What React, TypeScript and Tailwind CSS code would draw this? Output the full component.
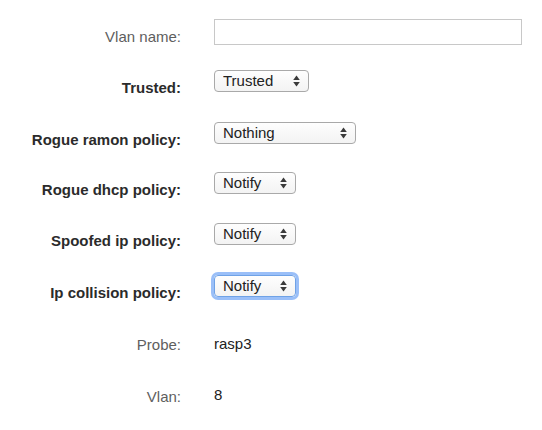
const rows = [
  { label: 'Vlan name:', bold: false, kind: 'input', h: 'h-[51px]', lt: 'pt-[8px]' },
  { label: 'Trusted:', bold: true, kind: 'select', value: 'Trusted', w: 'w-[95px]', h: 'h-[52px]', lt: 'pt-[8px]' },
  { label: 'Rogue ramon policy:', bold: true, kind: 'select', value: 'Nothing', w: 'w-[142px]', h: 'h-[50px]', lt: 'pt-[8px]' },
  { label: 'Rogue dhcp policy:', bold: true, kind: 'select', value: 'Notify', w: 'w-[82px]', h: 'h-[51px]', lt: 'pt-[8px]' },
  { label: 'Spoofed ip policy:', bold: true, kind: 'select', value: 'Notify', w: 'w-[82px]', h: 'h-[52px]', lt: 'pt-[8px]' },
  { label: 'Ip collision policy:', bold: true, kind: 'select', value: 'Notify', w: 'w-[82px]', h: 'h-[53px]', lt: 'pt-[8px]', focus: true },
  { label: 'Probe:', bold: false, kind: 'text', value: 'rasp3', h: 'h-[51px]', lt: 'pt-[7px]' },
  { label: 'Vlan:', bold: false, kind: 'text', value: '8', h: 'h-[51px]', lt: 'pt-[8px]' },
];

function Arrows() {
  return (
    <svg
      width="7"
      height="12"
      viewBox="0 0 7 12"
      className="pointer-events-none absolute right-[8px] top-1/2 -translate-y-1/2"
    >
      <path d="M3.5 0.5 L6.8 5 L0.2 5 Z" fill="#3a3a3a" />
      <path d="M3.5 11.5 L6.8 7 L0.2 7 Z" fill="#3a3a3a" />
    </svg>
  );
}

function FakeSelect({ value, w, focus }: { value: string; w?: string; focus?: boolean }) {
  return (
    <div
      className={
        'relative h-[22px] rounded-[4px] border bg-gradient-to-b from-[#fefefe] to-[#f3f3f3] ' +
        (w ?? '') +
        (focus
          ? ' border-[#6fa2e6] shadow-[0_0_0_3px_rgba(120,170,245,0.75)]'
          : ' border-[#a9a9a9]')
      }
    >
      <select
        defaultValue={value}
        className="h-full w-full appearance-none bg-transparent pl-[8px] pr-[20px] text-[15px] leading-[20px] text-[#222] outline-none"
      >
        <option>{value}</option>
      </select>
      <Arrows />
    </div>
  );
}

export default function App() {
  return (
    <div className="min-h-[430px] w-[542px] bg-white pt-[19px] font-['Liberation_Sans',Arial,sans-serif] text-[15px] leading-[20px]">
      {rows.map((r) => (
        <div key={r.label} className={'flex items-start ' + r.h}>
          <label
            className={
              'w-[181px] shrink-0 text-right ' +
              r.lt +
              (r.bold ? ' font-bold text-[#2b2b2b]' : ' text-[#5e5e5e]')
            }
          >
            {r.label}
          </label>
          <div className="ml-[33px]">
            {r.kind === 'input' && (
              <input
                type="text"
                className="block h-[26px] w-[308px] border border-[#c8c8c8] bg-white px-2 outline-none"
              />
            )}
            {r.kind === 'select' && (
              <FakeSelect value={r.value!} w={r.w} focus={r.focus} />
            )}
            {r.kind === 'text' && (
              <div className="pt-[6px] text-[#222]">{r.value}</div>
            )}
          </div>
        </div>
      ))}
    </div>
  );
}
